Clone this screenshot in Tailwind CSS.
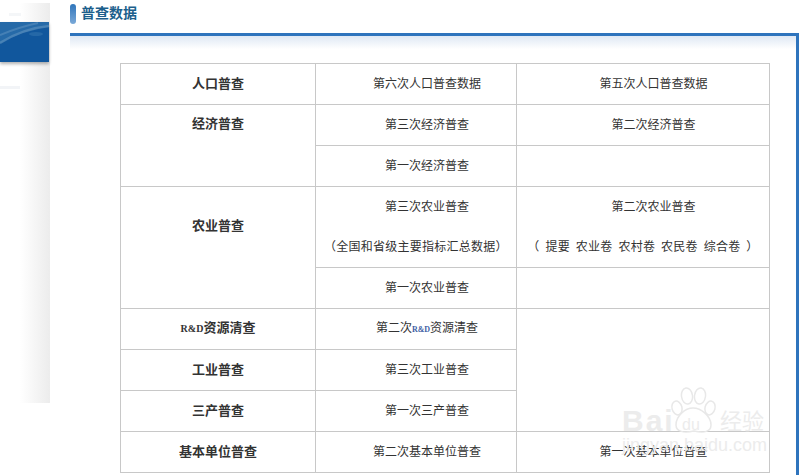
<!DOCTYPE html>
<html lang="zh">
<head>
<meta charset="utf-8">
<script src="https://cdn.jsdelivr.net/npm/@tailwindcss/browser@4"></script>
</head>
<body class="bg-white">
<div class="relative flex h-[475px] w-[812px] overflow-hidden bg-white font-['Noto_Sans_CJK_SC','Liberation_Sans',sans-serif] text-xs text-[#333]">
  <aside class="mt-[3px] h-[400px] w-[50px] shrink-0 bg-gradient-to-r from-white from-40% to-[#ececec]">
    <div class="ml-[9px] mt-[10px] h-[3px] w-[12px] bg-[#f4f6f8]"></div>
    <div class="mt-[6px] h-[40px] w-[49px] overflow-hidden bg-[#11579d] shadow-[0_2px_3px_rgba(0,0,0,0.3)]">
      <svg width="49" height="40" viewBox="0 0 49 40" fill="none">
        <rect width="49" height="40" fill="#11579d"/>
        <path d="M0 0h49v5C34 6 14 13 0 22z" fill="#266aa8"/>
        <path d="M0 21C14 12 30 6 49 4" stroke="#7ea7ca" stroke-width="2.5" opacity="0.4"/>
        <path d="M0 13C12 8 24 4 38 1" stroke="#8fb4d4" stroke-width="2" opacity="0.3"/>
        <ellipse cx="36" cy="12" rx="7" ry="2" fill="#3a7ab2" opacity="0.5"/>
      </svg>
    </div>
    <div class="mt-[24px] h-[3px] w-[20px] bg-[#f2f4f7]"></div>
  </aside>
  <main class="ml-[20px] w-[729px] shrink-0">
    <h2 class="flex h-[33px] items-start gap-[5px] pt-1">
      <span class="h-[20px] w-[6px] rounded-[3px] bg-gradient-to-b from-[#2d75bb] to-[#7aa9d8]"></span>
      <span class="text-sm font-bold leading-[16px] text-[#1c5f8c]">普查数据</span>
    </h2>
    <section class="h-[442px] border-r-[3px] border-t-[3px] border-[#2e74bd] bg-gradient-to-b from-[#dfe8f4] from-0% to-white to-[3%] pl-[50px] pt-[27px]">
      <table class="w-[650px] table-fixed border-collapse text-center leading-[20px]">
        <colgroup><col class="w-[195px]"><col class="w-[201px]"><col class="w-[253px]"></colgroup>
        <tbody>
          <tr class="h-[41px]">
            <td class="border border-[#c8c8c8] pb-[3px] align-middle text-[13px] font-bold">人口普查</td>
            <td class="border border-[#c8c8c8] pb-[2px] align-middle indent-[22px]">第六次人口普查数据</td>
            <td class="border border-[#c8c8c8] pb-[2px] align-middle indent-[21px]">第五次人口普查数据</td>
          </tr>
          <tr class="h-[41px]">
            <td rowspan="2" class="border border-[#c8c8c8] pt-[8px] align-top text-[13px] font-bold">经济普查</td>
            <td class="border border-[#c8c8c8] pb-[2px] align-middle indent-[22px]">第三次经济普查</td>
            <td class="border border-[#c8c8c8] pb-[2px] align-middle indent-[21px]">第二次经济普查</td>
          </tr>
          <tr class="h-[41px]">
            <td class="border border-[#c8c8c8] pb-[2px] align-middle indent-[22px]">第一次经济普查</td>
            <td class="border border-[#c8c8c8]"></td>
          </tr>
          <tr class="h-[81px]">
            <td rowspan="2" class="border border-[#c8c8c8] pt-[28px] align-top text-[13px] font-bold">农业普查</td>
            <td class="border border-[#c8c8c8] pb-[2px] align-middle">
              <p class="indent-[22px]">第三次农业普查</p>
              <p class="mt-[20px] tracking-[0.25px]">（全国和省级主要指标汇总数据）</p>
            </td>
            <td class="border border-[#c8c8c8] pb-[2px] align-middle">
              <p class="indent-[21px]">第二次农业普查</p>
              <p class="mt-[20px] whitespace-pre tracking-[0.25px]">（  提要  农业卷  农村卷  农民卷  综合卷  ）</p>
            </td>
          </tr>
          <tr class="h-[41px]">
            <td class="border border-[#c8c8c8] pb-[2px] align-middle indent-[22px]">第一次农业普查</td>
            <td class="border border-[#c8c8c8]"></td>
          </tr>
          <tr class="h-[41px]">
            <td class="border border-[#c8c8c8] pb-[3px] align-middle text-[13px] font-bold"><span class="font-['Liberation_Serif',serif] text-[10px]">R&amp;D</span>资源清查</td>
            <td class="border border-[#c8c8c8] pb-[2px] align-middle indent-[22px]">第二次<span class="font-['Liberation_Serif',serif] text-[8px] font-bold text-[#3f5fa5]">R&amp;D</span>资源清查</td>
            <td rowspan="3" class="border border-[#c8c8c8]"></td>
          </tr>
          <tr class="h-[41px]">
            <td class="border border-[#c8c8c8] pb-[3px] align-middle text-[13px] font-bold">工业普查</td>
            <td class="border border-[#c8c8c8] pb-[2px] align-middle indent-[22px]">第三次工业普查</td>
          </tr>
          <tr class="h-[41px]">
            <td class="border border-[#c8c8c8] pb-[3px] align-middle text-[13px] font-bold">三产普查</td>
            <td class="border border-[#c8c8c8] pb-[2px] align-middle indent-[22px]">第一次三产普查</td>
          </tr>
          <tr class="h-[41px]">
            <td class="border border-[#c8c8c8] pb-[3px] align-middle text-[13px] font-bold">基本单位普查</td>
            <td class="border border-[#c8c8c8] pb-[2px] align-middle indent-[22px]">第二次基本单位普查</td>
            <td class="border border-[#c8c8c8] pb-[2px] align-middle indent-[21px]">第一次基本单位普查</td>
          </tr>
        </tbody>
      </table>
    </section>
  </main>
  <div class="pointer-events-none absolute left-[622px] top-[387px] h-[68px] w-[150px] text-[#ececec]">
    <svg class="absolute left-[48px] top-0" width="48" height="48" viewBox="0 0 48 48" fill="none" stroke="#e8e8e8" stroke-width="1.5">
      <ellipse cx="7" cy="21" rx="5" ry="7" transform="rotate(-15 7 21)"/>
      <ellipse cx="17" cy="9" rx="5.5" ry="8" transform="rotate(-8 17 9)"/>
      <ellipse cx="30" cy="9" rx="5.5" ry="8" transform="rotate(8 30 9)"/>
      <ellipse cx="40" cy="21" rx="5" ry="7" transform="rotate(15 40 21)"/>
      <path d="M6 38c0-9 9-17 17-17s18 8 18 17c0 7-7 8-17 6-10 2-18 1-18-6z"/>
    </svg>
    <div class="absolute left-0 top-[18px] font-['Liberation_Sans',sans-serif] text-[30px] font-bold leading-[32px] tracking-[2px]">Bai</div>
    <div class="absolute left-[60px] top-[28px] font-['Liberation_Sans',sans-serif] text-[16px] leading-[20px]">du</div>
    <div class="absolute left-[98px] top-[17px] text-[22px] leading-[30px]">经验</div>
    <div class="absolute left-0 top-[48px] font-['Liberation_Sans',sans-serif] text-[18px] leading-[20px]">jingyan.baidu.com</div>
  </div>
</div>
</body>
</html>
